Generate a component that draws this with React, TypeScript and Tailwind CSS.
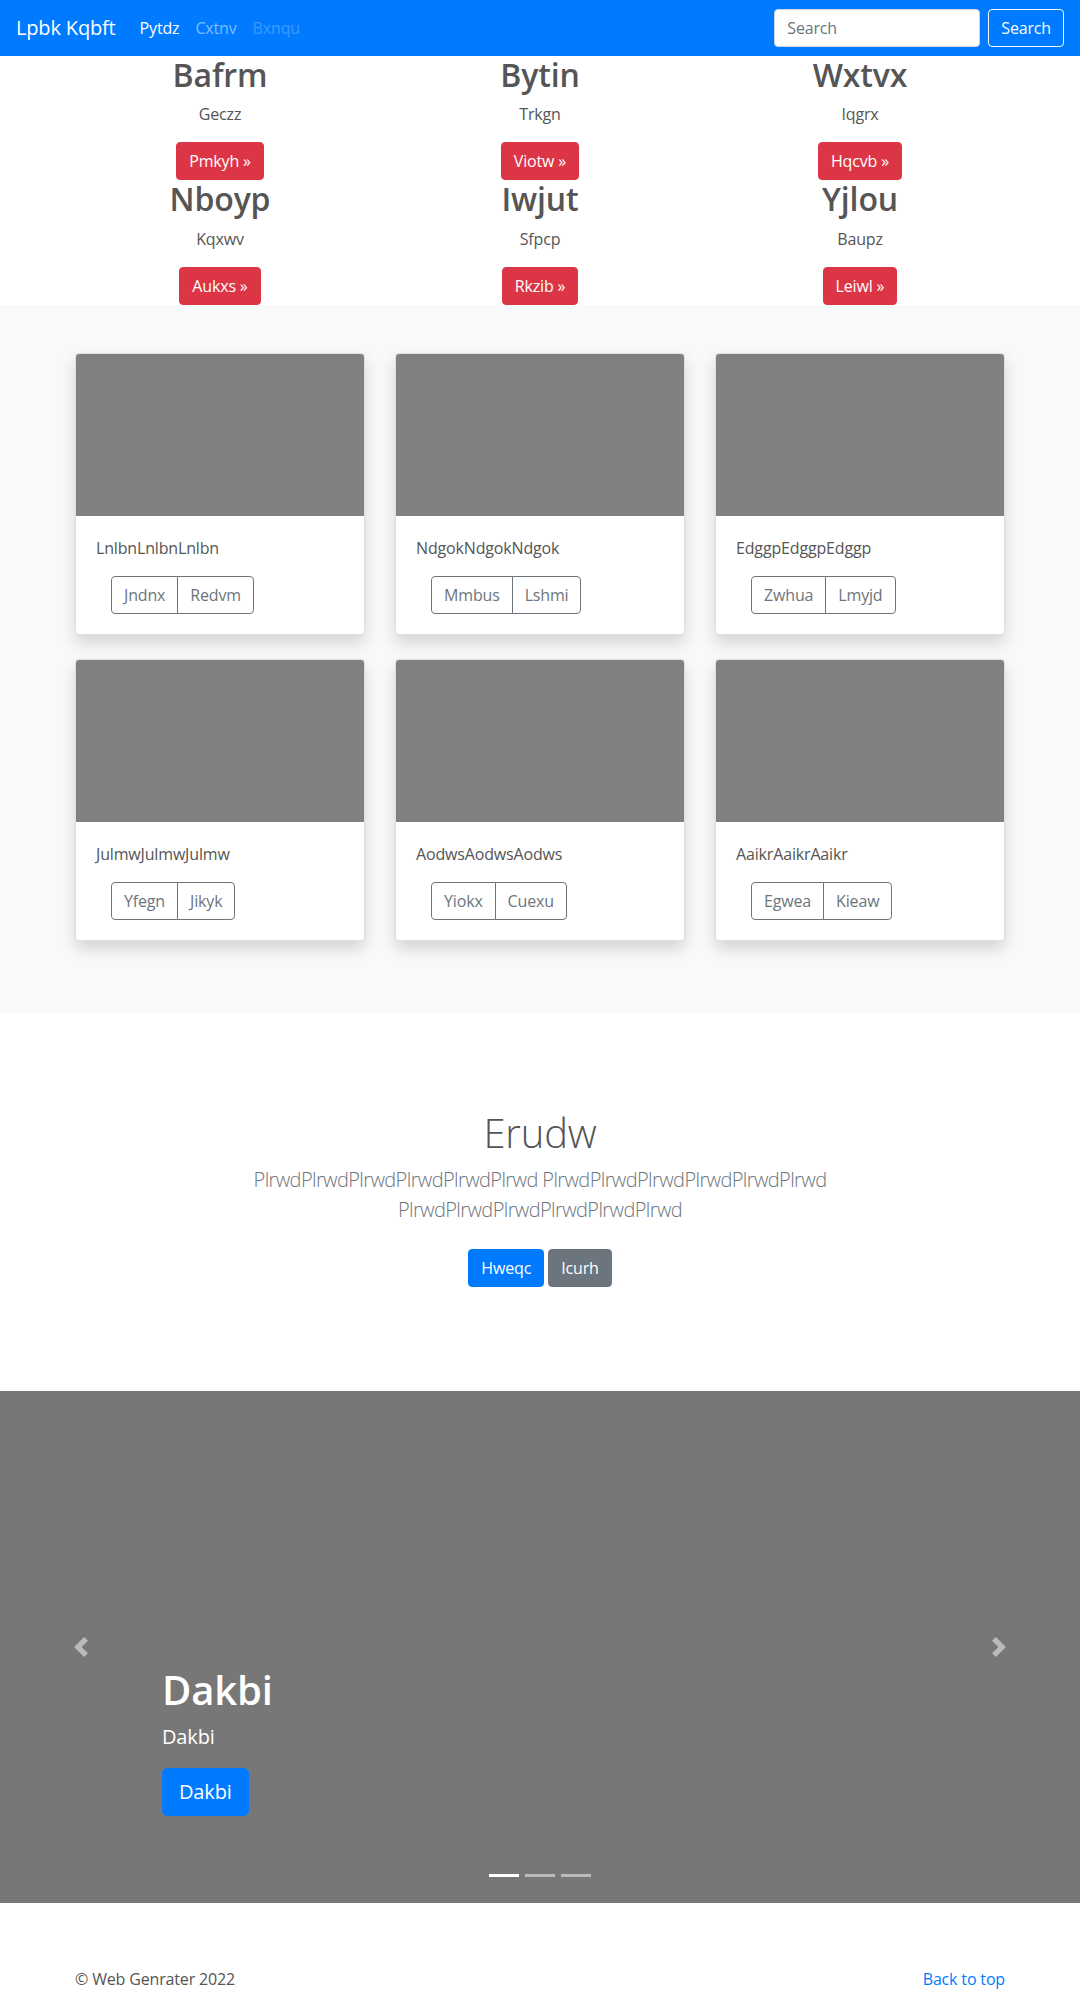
import React from "react";

const tops = [
  { h: "Bafrm", p: "Geczz", b: "Pmkyh" },
  { h: "Bytin", p: "Trkgn", b: "Viotw" },
  { h: "Wxtvx", p: "Iqgrx", b: "Hqcvb" },
  { h: "Nboyp", p: "Kqxwv", b: "Aukxs" },
  { h: "Iwjut", p: "Sfpcp", b: "Rkzib" },
  { h: "Yjlou", p: "Baupz", b: "Leiwl" },
];

const cards = [
  { t: "LnlbnLnlbnLnlbn", a: "Jndnx", b: "Redvm" },
  { t: "NdgokNdgokNdgok", a: "Mmbus", b: "Lshmi" },
  { t: "EdggpEdggpEdggp", a: "Zwhua", b: "Lmyjd" },
  { t: "JulmwJulmwJulmw", a: "Yfegn", b: "Jikyk" },
  { t: "AodwsAodwsAodws", a: "Yiokx", b: "Cuexu" },
  { t: "AaikrAaikrAaikr", a: "Egwea", b: "Kieaw" },
];

function Chevron({ dir }: { dir: "left" | "right" }) {
  return (
    <svg width="20" height="20" viewBox="0 0 8 8" className="opacity-50">
      {dir === "left" ? (
        <path fill="#fff" d="M5.25 0l-4 4 4 4 1.5-1.5L4.25 4l2.5-2.5L5.25 0z" />
      ) : (
        <path fill="#fff" d="M2.75 0l-1.5 1.5L3.75 4l-2.5 2.5L2.75 8l4-4-4-4z" />
      )}
    </svg>
  );
}

export default function App() {
  return (
    <div className="font-['Open_Sans','Noto_Sans',sans-serif] text-[16px] leading-[1.5] text-[#555] bg-white pb-px tracking-[-0.01em]">
      {/* Navbar */}
      <nav className="h-[56px] bg-[#007bff] px-4 flex items-center">
        <span className="text-[20px] text-white mr-4 leading-[30px]">Lpbk Kqbft</span>
        <div className="flex">
          <span className="px-2 text-white">Pytdz</span>
          <span className="px-2 text-[rgba(255,255,255,0.5)]">Cxtnv</span>
          <span className="px-2 text-[rgba(255,255,255,0.25)]">Bxnqu</span>
        </div>
        <div className="ml-auto flex items-center">
          <div className="w-[206px] h-[38px] bg-white border border-[#ced4da] rounded-[4px] px-3 flex items-center text-[#6c757d] mr-2">
            Search
          </div>
          <div className="h-[38px] px-3 border border-[#f8f9fa] rounded-[4px] text-[#f8f9fa] flex items-center">
            Search
          </div>
        </div>
      </nav>

      {/* Top feature grid */}
      <div className="w-[960px] mx-auto px-[15px]">
        <div className="grid grid-cols-3 -mx-[15px]">
          {tops.map((t) => (
            <div key={t.h} className="px-[15px] text-center">
              <h2 className="text-[32px] font-semibold leading-[1.2] mb-2 text-[#555]">{t.h}</h2>
              <p className="mb-4">{t.p}</p>
              <span className="inline-block bg-[#dc3545] text-white px-3 py-[6px] border border-[#dc3545] rounded-[4px] leading-[24px]">
                {t.b} »
              </span>
            </div>
          ))}
        </div>
      </div>

      {/* Album */}
      <div className="bg-[#f8f9fa] py-12">
        <div className="w-[960px] mx-auto px-[15px]">
          <div className="grid grid-cols-3 gap-x-[30px]">
            {cards.map((c) => (
              <div
                key={c.t}
                className="mb-6 bg-white border border-[rgba(0,0,0,0.125)] rounded-[4px] overflow-hidden shadow-[0_8px_16px_rgba(0,0,0,0.15)]"
              >
                <div className="h-[162px] bg-[#808080]" />
                <div className="p-5">
                  <p className="mb-4">{c.t}</p>
                  <div className="ml-[15px] inline-flex">
                    <span className="px-3 py-[6px] leading-[24px] border border-[#6c757d] text-[#6c757d] rounded-l-[4px]">
                      {c.a}
                    </span>
                    <span className="-ml-px px-3 py-[6px] leading-[24px] border border-[#6c757d] text-[#6c757d] rounded-r-[4px]">
                      {c.b}
                    </span>
                  </div>
                </div>
              </div>
            ))}
          </div>
        </div>
      </div>

      {/* Jumbotron */}
      <section className="py-24 text-center">
        <div className="w-[960px] mx-auto px-[15px]">
          <h1 className="text-[40px] font-light leading-[1.2] mb-2 text-[#555]">Erudw</h1>
          <p className="max-w-[630px] mx-auto text-[20px] font-light leading-[30px] text-[#6c757d] tracking-[-0.03em]">
            PlrwdPlrwdPlrwdPlrwdPlrwdPlrwd PlrwdPlrwdPlrwdPlrwdPlrwdPlrwd PlrwdPlrwdPlrwdPlrwdPlrwdPlrwd
          </p>
          <div className="flex justify-center gap-1 mt-6 mb-2">
            <span className="bg-[#007bff] text-white px-3 py-[6px] leading-[24px] border border-[#007bff] rounded-[4px]">
              Hweqc
            </span>
            <span className="bg-[#6c757d] text-white px-3 py-[6px] leading-[24px] border border-[#6c757d] rounded-[4px]">
              Icurh
            </span>
          </div>
        </div>
      </section>

      {/* Carousel */}
      <div className="relative h-[512px] bg-[#777] mb-16">
        <div className="absolute left-0 top-0 bottom-0 w-[15%] flex items-center justify-center">
          <Chevron dir="left" />
        </div>
        <div className="absolute right-0 top-0 bottom-0 w-[15%] flex items-center justify-center">
          <Chevron dir="right" />
        </div>
        <div className="absolute left-[15%] right-[15%] bottom-[51px] pt-5 pb-5 text-left text-white">
          <h1 className="text-[40px] font-semibold leading-[1.2] mb-2">Dakbi</h1>
          <p className="text-[20px] leading-[30px] mb-4">Dakbi</p>
          <p className="mb-4">
            <span className="inline-block bg-[#007bff] text-white px-4 py-2 text-[20px] leading-[30px] border border-[#007bff] rounded-[5px]">
              Dakbi
            </span>
          </p>
        </div>
        <div className="absolute bottom-0 left-0 right-0 flex justify-center mb-4">
          <span className="w-[30px] h-[3px] my-[10px] mx-[3px] bg-white" />
          <span className="w-[30px] h-[3px] my-[10px] mx-[3px] bg-white opacity-50" />
          <span className="w-[30px] h-[3px] my-[10px] mx-[3px] bg-white opacity-50" />
        </div>
      </div>

      {/* Footer */}
      <footer className="w-[960px] mx-auto px-[15px] flex justify-between">
        <p className="text-[#555]">© Web Genrater 2022</p>
        <p className="text-[#007bff]">Back to top</p>
      </footer>
    </div>
  );
}
